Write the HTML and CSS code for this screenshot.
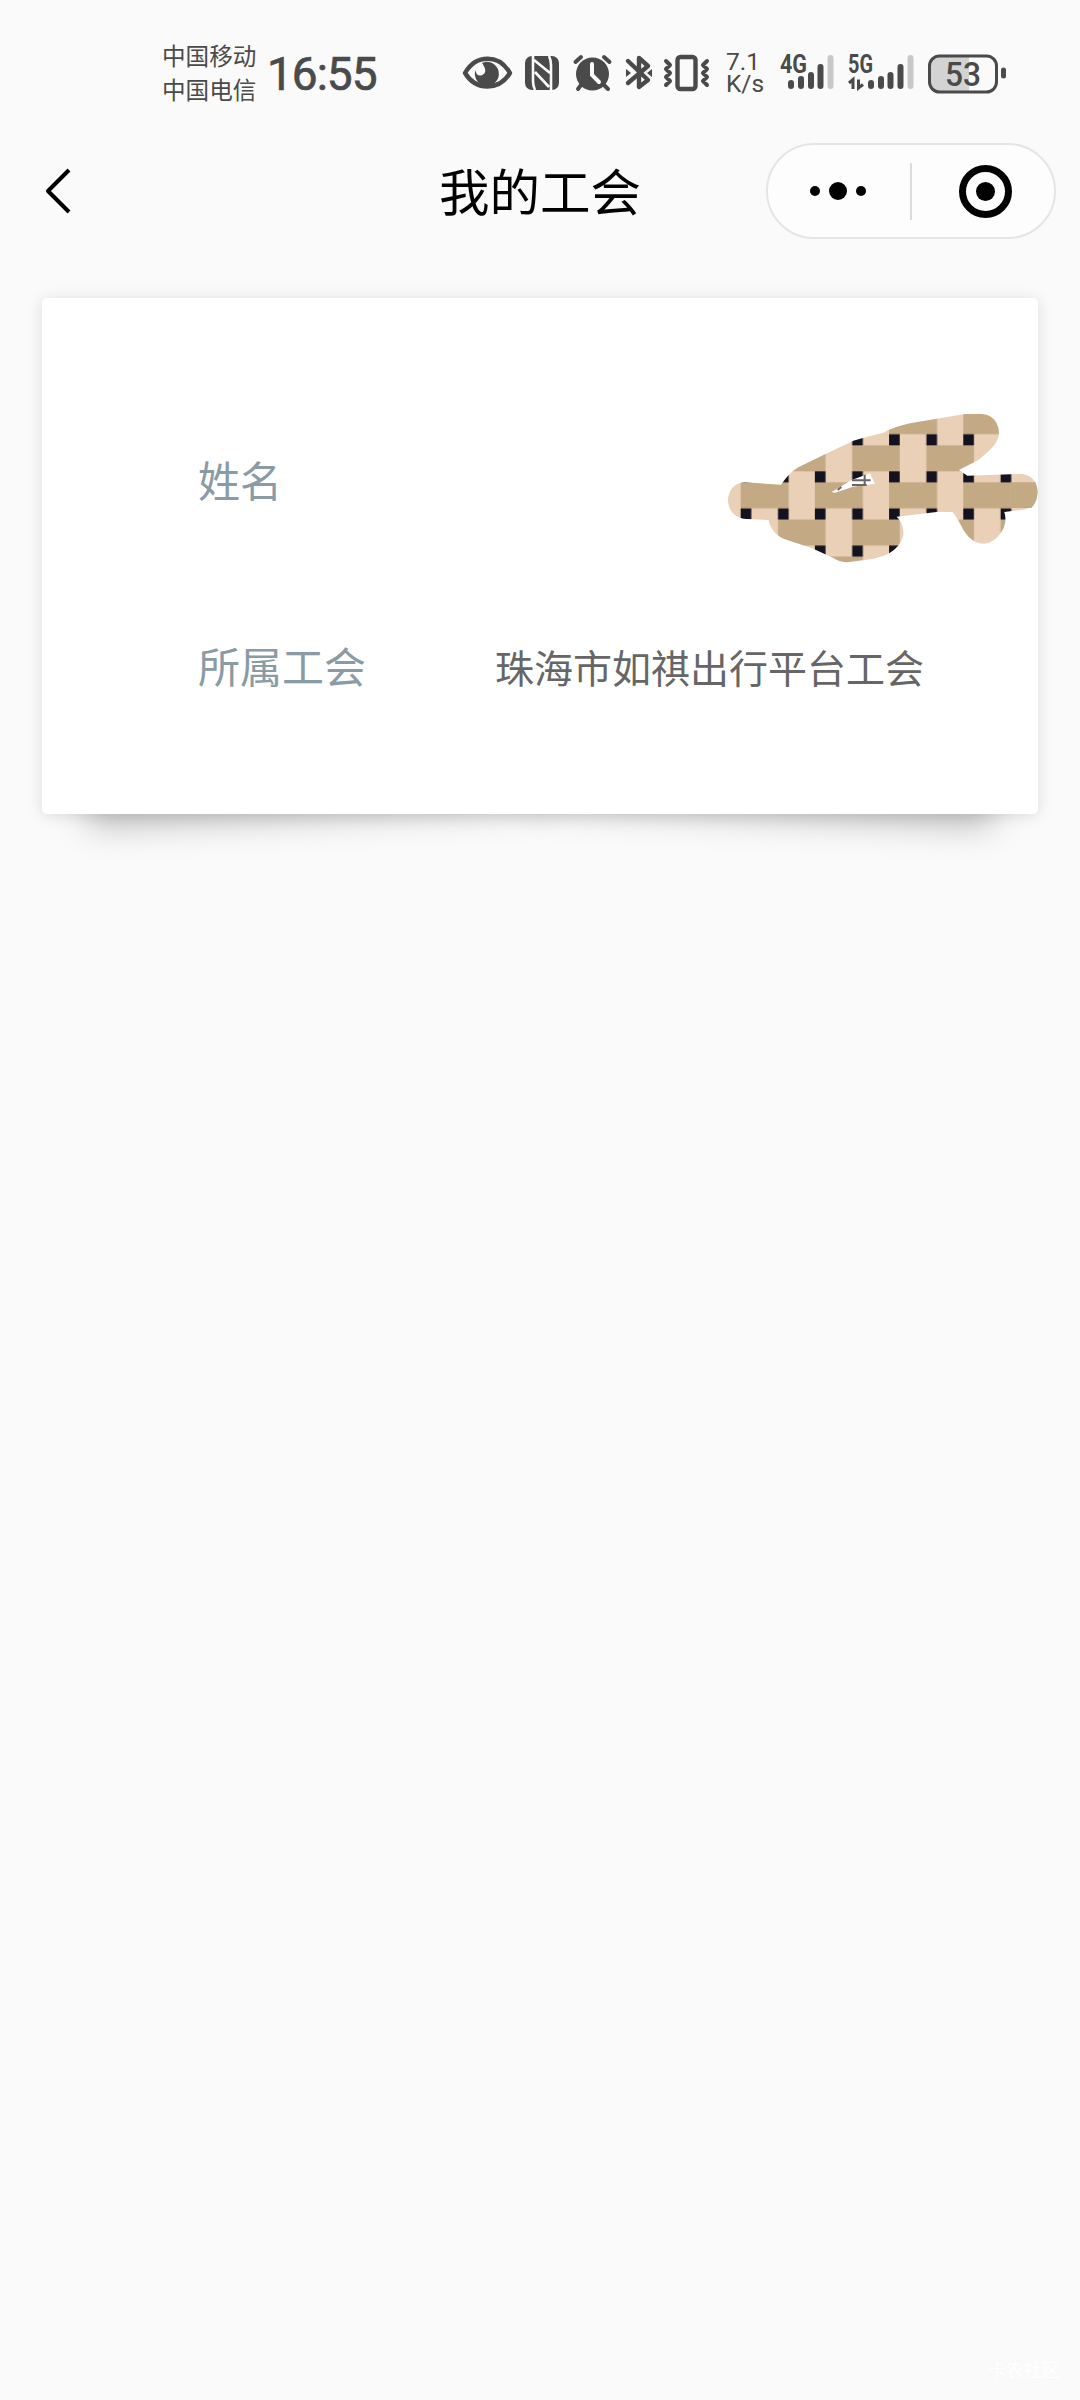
FILE: index.html
```html
<!DOCTYPE html>
<html lang="zh-CN">
<head>
	<meta charset="UTF-8">
	<title>我的工会</title>
	<link rel="stylesheet" href="styles.css">
</head>
<body>
	<div class="status-bar">
		<div class="carriers">
			<div>中国移动</div>
			<div>中国电信</div>
		</div>
		<div class="time">16:55</div>
		<svg class="status-icons" width="270" height="50" viewBox="0 0 270 50">
			<!-- eye -->
			<path d="M5 25C16 6 39 6 50 25C39 43 16 43 5 25Z" fill="none" stroke="#4a4a4a" stroke-width="4.400" stroke-linejoin="round"/>
			<path d="M25 14A12 12 0 1 1 15.500 22Q16 28 21 27.500Q29 25 22 15Z" fill="#4a4a4a"/>
			<!-- nfc -->
			<rect x="65" y="8" width="34" height="34" rx="7" fill="#4a4a4a"/>
			<path d="M73 8L73 33Q73 38 75 42M74 12L90 25M75 24L89 39M91 42V17Q91 12 89 8" fill="none" stroke="#fafafa" stroke-width="2.600"/>
			<!-- alarm -->
			<circle cx="132.500" cy="26" r="16.500" fill="#4a4a4a"/>
			<path d="M115.500 14L121 9M149.500 14L144 9M121 37L118 41M144 37L148 41" stroke="#4a4a4a" stroke-width="4" stroke-linecap="round"/>
			<path d="M132 16V27L139 34" fill="none" stroke="#fafafa" stroke-width="4" stroke-linecap="round"/>
			<!-- bluetooth -->
			<path d="M168 13L188 32L179 39V10L188 18L168 35" fill="none" stroke="#4a4a4a" stroke-width="4.400" stroke-linecap="round" stroke-linejoin="round"/>
			<path d="M166 21L171 25L166 29ZM192 21L187 25L192 29Z" fill="#4a4a4a"/>
			<!-- vibrate -->
			<rect x="217.500" y="9" width="18" height="32" rx="3" fill="none" stroke="#4a4a4a" stroke-width="4.400"/>
			<path d="M206 13L210 17L206 21L210 25L206 29L210 33L206 37M247 13L243 17L247 21L243 25L247 29L243 33L247 37" fill="none" stroke="#4a4a4a" stroke-width="4" stroke-linecap="round" stroke-linejoin="round"/>
		</svg>
		<div class="speed">
			<div>7.1</div>
			<div>K/s</div>
		</div>
		<svg class="signals" width="230" height="50" viewBox="0 0 230 50">
			<g class="net">
				<text x="0" y="25" textLength="27" lengthAdjust="spacingAndGlyphs">4G</text>
				<text x="68" y="25" textLength="25" lengthAdjust="spacingAndGlyphs">5G</text>
			</g>
			<g stroke="#4a4a4a" stroke-width="6" stroke-linecap="round">
				<path d="M11 35V38M21 31V38M31 27V38M40.500 19V38"/>
				<path d="M91 35V38M101 31V38M110.500 27V38M120.500 19V38"/>
				<path d="M50.500 10V38M130.500 10V38" stroke="#c8c8c8"/>
			</g>
			<path d="M69 35L73 31.500V41M78.500 31.500V40L83 36.500" fill="none" stroke="#4a4a4a" stroke-width="3"/>
			<!-- battery -->
			<path d="M160 8H189V43H160Q150 43 150 33V18Q150 8 160 8Z" fill="#d3d3d3"/>
			<rect x="149.500" y="8" width="67" height="36" rx="10" fill="none" stroke="#4a4a4a" stroke-width="3"/>
			<path d="M223.500 22V28" stroke="#4a4a4a" stroke-width="5" stroke-linecap="round"/>
			<text class="level" x="165" y="38" textLength="36" lengthAdjust="spacingAndGlyphs">53</text>
		</svg>
	</div>

	<div class="nav-bar">
		<svg class="back" width="30" height="48" viewBox="0 0 30 48">
			<path d="M27 3L6 24L27 45" fill="none" stroke="#000" stroke-width="4" stroke-linejoin="round"/>
		</svg>
		<h1 class="title">我的工会</h1>
		<div class="capsule">
			<svg width="142" height="92" viewBox="0 0 142 92">
				<circle cx="47" cy="46" r="5"/>
				<circle cx="70" cy="46" r="9"/>
				<circle cx="93" cy="46" r="5"/>
			</svg>
			<div class="divider"></div>
			<svg width="142" height="92" viewBox="0 0 142 92">
				<circle cx="73.500" cy="46.500" r="23" fill="none" stroke="#000" stroke-width="7"/>
				<circle cx="73.500" cy="46.500" r="9.500"/>
			</svg>
		</div>
	</div>

	<div class="card">
		<div class="row">
			<div class="label">姓名</div>
			<svg class="mosaic" width="310" height="152" viewBox="54 66 930 456">
				<defs>
					<pattern id="weave" x="92" y="166" width="222.600" height="222.600" patternUnits="userSpaceOnUse">
						<rect width="223" height="223" fill="#e9d0b6"/>
						<rect x="112" width="143" height="78" fill="#c4a985"/>
						<rect x="-111" width="143" height="78" fill="#c4a985"/>
						<rect y="111" width="144" height="78" fill="#c4a985"/>
						<path d="M0 78H32V111H0ZM112 78H144V111H112ZM0 189H32V222.600H0ZM112 189H144V222.600H112Z" fill="#141221"/>
					</pattern>
				</defs>
				<path fill="url(#weave)" d="M104 277L213 284Q236 250 262 233L345 193L430 152Q480 137 520 128Q550 111 600 100L765 72H815C845 72 867 97 867 128C867 160 835 185 805 210L747 240L772 257L930 252C965 252 982 276 982 305C982 335 965 359 930 360L883 366Q890 390 882 412C868 442 845 461 820 461C790 461 770 438 757 414Q745 388 728 366L680 366L560 380C575 394 582 415 580 435C575 462 553 482 535 491Q505 505 470 509L412 517Q390 517 370 504L310 476L225 448C200 440 180 415 176 390L110 387C75 385 55 362 54 331C55 300 75 278 104 277Z"/>
				<path d="M902 277H976Q985 295 982 315Q980 338 964 354H902Z" fill="#c4a985"/>
				<path d="M365 306L425 270L480 250L495 281L430 290L375 308Z" fill="#fff"/>
				<path d="M426 271H482M426 285H470M464 254V285M383 300L394 291" fill="none" stroke="#666" stroke-width="6"/>
			</svg>
		</div>
		<div class="row">
			<div class="label">所属工会</div>
			<div class="value">珠海市如祺出行平台工会</div>
		</div>
	</div>

	<div class="watermark">卡农社区</div>
</body>
</html>
```
FILE: styles.css
```css
* {
	box-sizing: border-box;
}
body {
	margin: 0;
	height: 2400px;
	display: flex;
	flex-direction: column;
	background-color: #fafafa;
	font-family: "Noto Sans CJK SC", sans-serif;
}
.status-bar {
	height: 143px;
	padding: 38px 0 0 162px;
	display: flex;
	align-items: flex-start;
	color: #4a4a4a;
}
.carriers {
	width: 105px;
	font-size: 23.6px;
	line-height: 34px;
}
.time {
	width: 193px;
	font-family: Roboto, sans-serif;
	font-size: 46px;
	font-weight: 400;
	line-height: 72px;
	letter-spacing: -1px;
	-webkit-text-stroke: 0.7px #4a4a4a;
}
.status-icons {
	margin-top: 10px;
}
.speed {
	width: 50px;
	margin-top: 13px;
	margin-left: -4px;
	margin-right: 4px;
	font-family: Roboto, sans-serif;
	font-size: 24.5px;
	line-height: 22px;
}
.signals {
	margin-top: 10px;
}
.signals text {
	fill: #4a4a4a;
	font-family: Roboto, sans-serif;
	font-weight: 700;
	font-size: 25px;
}
.signals .level {
	font-size: 34px;
	font-weight: 500;
}
.nav-bar {
	height: 96px;
	padding: 0 24px 0 42px;
	display: grid;
	grid-template-columns: 272px 1fr 290px;
	align-items: center;
}
.title {
	margin: 0;
	padding-bottom: 4px;
	text-align: center;
	font-size: 50.5px;
	font-weight: 400;
	line-height: 92px;
	color: #000;
}
.capsule {
	height: 96px;
	display: flex;
	align-items: center;
	background-color: #fdfdfd;
	border: 2px solid #e5e5e5;
	border-radius: 48px;
}
.divider {
	width: 2px;
	height: 57px;
	background-color: #dcdcdc;
}
.card {
	position: relative;
	width: 996px;
	height: 516px;
	margin: 59px 42px 0;
	padding-top: 87px;
	background-color: #fff;
	border-radius: 5px;
	box-shadow: 0 2px 16px rgba(0, 0, 0, 0.12);
}
/* lifted corners */
.card:before,
.card:after {
	content: "";
	position: absolute;
	z-index: -1;
	bottom: 40px;
	width: 46%;
	height: 20%;
	box-shadow: 0 42px 34px rgba(0, 0, 0, 0.25);
}
.card:before {
	left: 42px;
	transform: rotate(-2.6deg);
}
.card:after {
	right: 42px;
	transform: rotate(2.6deg);
}
.row {
	height: 186px;
	padding-left: 156px;
	display: flex;
	align-items: center;
}
.label {
	width: 297px;
	font-size: 42px;
	color: #8a9ba5;
}
.value {
	padding-top: 3px;
	font-size: 39px;
	color: #666;
}
.mosaic {
	margin: 20px 0 0 auto;
}
.watermark {
	margin: auto 20px 18px auto;
	font-size: 18px;
	line-height: 26px;
	color: #fff;
}
```
